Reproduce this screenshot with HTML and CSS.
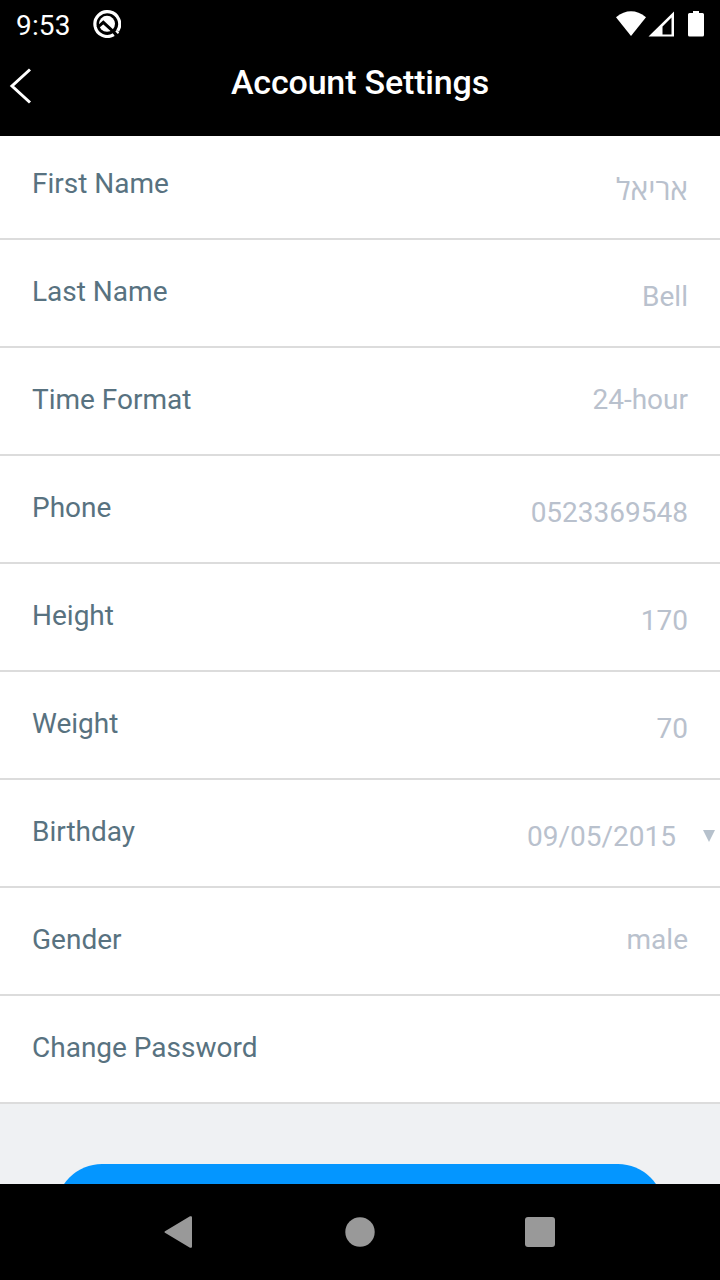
FILE: index.html
```html
<!DOCTYPE html>
<html lang="en">
<head>
<meta charset="utf-8">
<title>Account Settings</title>
<link rel="stylesheet" href="styles.css">
</head>
<body>
<div class="screen">
  <header class="top">
    <div class="status">
      <div class="status-left">
        <span class="clock">9:53</span>
        <svg class="notice" width="28" height="28" viewBox="0 0 28 28">
          <path d="M24.700 20.800A12.400 12.400 0 1 0 20.800 24.600" fill="none" stroke="#fff" stroke-width="3.200"/>
          <circle cx="14" cy="13.800" r="8" fill="#fff"/>
          <path d="M4.500 17.500L10.300 12.300L23.500 24.500" fill="none" stroke="#000" stroke-width="3"/>
          <path d="M23 20.800L25.500 23.200" stroke="#fff" stroke-width="2"/>
        </svg>
      </div>
      <svg class="signals" width="90" height="28" viewBox="0 0 90 28">
        <path d="M0 6.300Q15-5.600 30 6.300L15 25Z" fill="#fff"/>
        <path fill-rule="evenodd" d="M58 .500V25.500H32.500ZM55.500 6.500L46.500 15.500V23.500H55.500Z" fill="#fff"/>
        <path d="M73.500 2H77V0H83V2H86.500Q88 2 88 3.500V24Q88 25.500 86.500 25.500H73.500Q72 25.500 72 24V3.500Q72 2 73.500 2Z" fill="#fff"/>
      </svg>
    </div>
    <div class="titlebar">
      <svg class="back" width="24" height="36" viewBox="0 0 24 36"><path d="M21 1.500L3 18L21 34.500" fill="none" stroke="#fff" stroke-width="3"/></svg>
      <h1 class="title">Account Settings</h1>
    </div>
  </header>
  <main class="content">
    <div class="row row-first"><span class="label">First Name</span><span class="value low hebrew" dir="rtl" lang="he">אריאל</span></div>
    <div class="row"><span class="label">Last Name</span><span class="value low">Bell</span></div>
    <div class="row"><span class="label">Time Format</span><span class="value">24-hour</span></div>
    <div class="row"><span class="label">Phone</span><span class="value low">0523369548</span></div>
    <div class="row"><span class="label">Height</span><span class="value low">170</span></div>
    <div class="row"><span class="label">Weight</span><span class="value low">70</span></div>
    <div class="row row-date"><span class="label">Birthday</span><span class="value low">09/05/2015</span><svg class="caret" width="12" height="12" viewBox="0 0 12 12"><path d="M0 0H12L6 12Z" fill="#b6c1cc"/></svg></div>
    <div class="row"><span class="label">Gender</span><span class="value">male</span></div>
    <div class="row"><span class="label">Change Password</span></div>
    <div class="footer"><div class="button"></div></div>
  </main>
  <nav class="nav">
    <svg width="32" height="34" viewBox="0 0 32 34"><path d="M1.500 17L26.500 2.200Q27 2 27 2.500V31.500Q27 32 26.500 31.800Z" fill="#999" stroke="#999" stroke-width="2" stroke-linejoin="round"/></svg>
    <svg width="32" height="34" viewBox="0 0 32 34"><circle cx="16" cy="17" r="14.700" fill="#999"/></svg>
    <svg width="32" height="34" viewBox="0 0 32 34"><rect x="1" y="2" width="30" height="30" rx="3" fill="#999"/></svg>
  </nav>
</div>
</body>
</html>
```
FILE: styles.css
```css
* { box-sizing: border-box; }
body { margin: 0; background: #000; font-family: Roboto, "Open Sans", "Noto Sans", sans-serif; }
svg { display: block; flex: none; }
.screen { width: 720px; height: 1280px; display: flex; flex-direction: column; overflow: hidden; }
.top { height: 136px; flex: none; background: #000; color: #fff; }
.status { height: 48px; display: flex; justify-content: space-between; padding: 9px 14px 0 16px; }
.status-left { display: flex; gap: 22.5px; }
.clock { width: 54px; font-size: 28px; line-height: 33px; letter-spacing: 0.15px; }
.notice { margin-top: 1px; }
.signals { margin-top: 2px; }
.titlebar { height: 88px; display: grid; grid-template-columns: 48px 1fr 48px; align-items: start; }
.back { margin: 20px 0 0 9px; }
.title { margin: 14px 0 0; text-align: center; font-size: 34px; line-height: 40px; font-weight: 500; letter-spacing: -0.17px; white-space: nowrap; }
.content { flex: 1; min-height: 0; overflow: hidden; background: #eff1f3; }
.row { height: 108px; display: flex; justify-content: space-between; align-items: flex-end; padding: 0 32px 38px; background: #fff; border-bottom: 2px solid #dcdcdc; font-size: 28px; line-height: 33px; }
.row-first { height: 104px; }
.label { color: #587280; }
.value { color: #b9c1cd; }
.low { margin-bottom: -5px; }
.hebrew { height: 33px; font-family: "Open Sans", "Noto Sans", sans-serif; font-size: 30px; }
.row-date { padding-right: 5px; }
.row-date .value { margin-left: auto; }
.caret { margin: 0 0 6px 27px; }
.footer { height: 80px; padding: 60px 56px 0; }
.button { height: 92px; border-radius: 46px; background: #0496ff; }
.nav { height: 96px; flex: none; background: #000; display: flex; justify-content: center; align-items: center; gap: 148px; }
```
